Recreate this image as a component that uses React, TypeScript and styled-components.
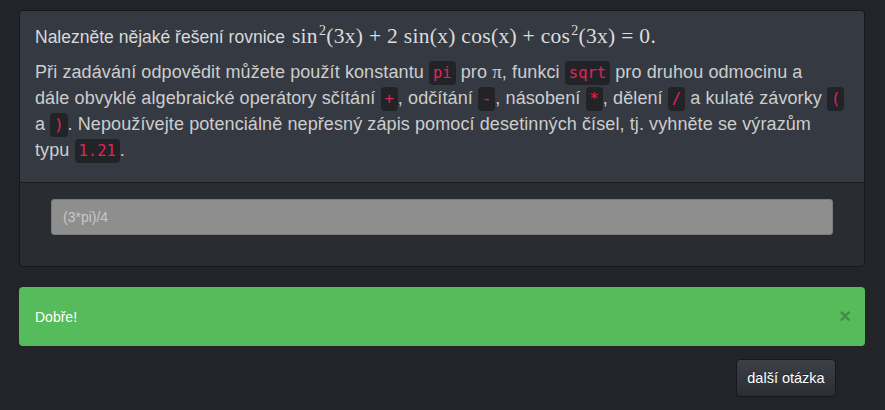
import React from "react";
import styled, { createGlobalStyle } from "styled-components";

const Global = createGlobalStyle`
  html, body { margin: 0; padding: 0; background: #222429; }
  body { font-family: "Liberation Sans", Arial, sans-serif; }
`;

const Page = styled.div`
  padding: 10px 20px 14px 19px;
  display: flex;
  flex-direction: column;
`;

const Card = styled.div`
  border: 1px solid #17181b;
  border-radius: 4px;
  overflow: hidden;
  background: #292c31;
`;

const CardHeader = styled.div`
  background: #353a42;
  border-bottom: 1px solid #1a1c1f;
  padding: 11px 14px 19px 15px;
`;

const Title = styled.div`
  color: #d9d9d9;
  font-size: 17.5px;
  line-height: 28px;
  margin-bottom: 8px;
`;

const Math = styled.span`
  font-family: "Liberation Serif", "Times New Roman", serif;
  font-size: 21.5px;
  letter-spacing: 0.3px;
  color: #dcdcdc;
  margin-left: 2px;
  sup { font-size: 14px; vertical-align: 8px; line-height: 0; margin-left: 1px; }
`;

const Pi = styled.span`
  font-family: "Liberation Serif", "Times New Roman", serif;
  font-size: 19px;
  line-height: 18px;
`;

const Para = styled.p`
  margin: 0;
  color: #cdcdcd;
  font-size: 18px;
  letter-spacing: 0.1px;
  line-height: 26px;
  white-space: nowrap;
`;

const Code = styled.code`
  font-family: "DejaVu Sans Mono", "Liberation Mono", monospace;
  font-size: 15.5px;
  line-height: 18px;
  letter-spacing: 0;
  color: #e0245a;
  background: #222327;
  border-radius: 4px;
  padding: 3px 4px;
`;

const CardBody = styled.div`
  padding: 16px 31px 31px 31px;
`;

const Input = styled.input`
  display: block;
  width: 100%;
  box-sizing: border-box;
  height: 36px;
  background: #8e8e8e;
  border: 1px solid #7a7a7a;
  border-radius: 3px;
  padding: 0 11px;
  font-family: "Liberation Sans", Arial, sans-serif;
  font-size: 14px;
  color: #eee;
  &::placeholder { color: #c8c8c8; }
`;

const Alert = styled.div`
  margin-top: 20px;
  background: #56bb5a;
  border-radius: 4px;
  height: 59px;
  padding: 0 15px 0 16px;
  display: flex;
  align-items: center;
  justify-content: space-between;
  color: #ffffff;
  font-size: 14px;
`;

const Close = styled.span`
  color: #3f8c42;
  font-size: 20px;
  font-weight: bold;
  margin-right: -1px;
`;

const Actions = styled.div`
  display: flex;
  justify-content: flex-end;
  padding-right: 29px;
  margin-top: 13px;
`;

const Button = styled.button`
  height: 38px;
  width: 100px;
  border: 1px solid #17181b;
  border-radius: 4px;
  background: linear-gradient(#3c4047, #2b2e33);
  color: #ffffff;
  font-family: "Liberation Sans", Arial, sans-serif;
  font-size: 14.5px;
  text-shadow: 0 -1px 0 rgba(0,0,0,0.4);
  padding: 0;
`;

export default function App() {
  return (
    <>
      <Global />
      <Page>
        <Card>
          <CardHeader>
            <Title>
              Nalezněte nějaké řešení rovnice{" "}
              <Math>
                sin<sup>2</sup>(3x) + 2 sin(x) cos(x) + cos<sup>2</sup>(3x) = 0.
              </Math>
            </Title>
            <Para>
              Při zadávání odpovědit můžete použít konstantu <Code>pi</Code> pro <Pi>π</Pi>, funkci{" "}
              <Code>sqrt</Code> pro druhou odmocinu a
              <br />
              dále obvyklé algebraické operátory sčítání <Code>+</Code>, odčítání <Code>-</Code>,
              násobení <Code>*</Code>, dělení <Code>/</Code> a kulaté závorky <Code>(</Code>
              <br />
              a <Code>)</Code>. Nepoužívejte potenciálně nepřesný zápis pomocí desetinných čísel,
              tj. vyhněte se výrazům
              <br />
              typu <Code>1.21</Code>.
            </Para>
          </CardHeader>
          <CardBody>
            <Input placeholder="(3*pi)/4" />
          </CardBody>
        </Card>
        <Alert>
          <span>Dobře!</span>
          <Close>×</Close>
        </Alert>
        <Actions>
          <Button>další otázka</Button>
        </Actions>
      </Page>
    </>
  );
}
